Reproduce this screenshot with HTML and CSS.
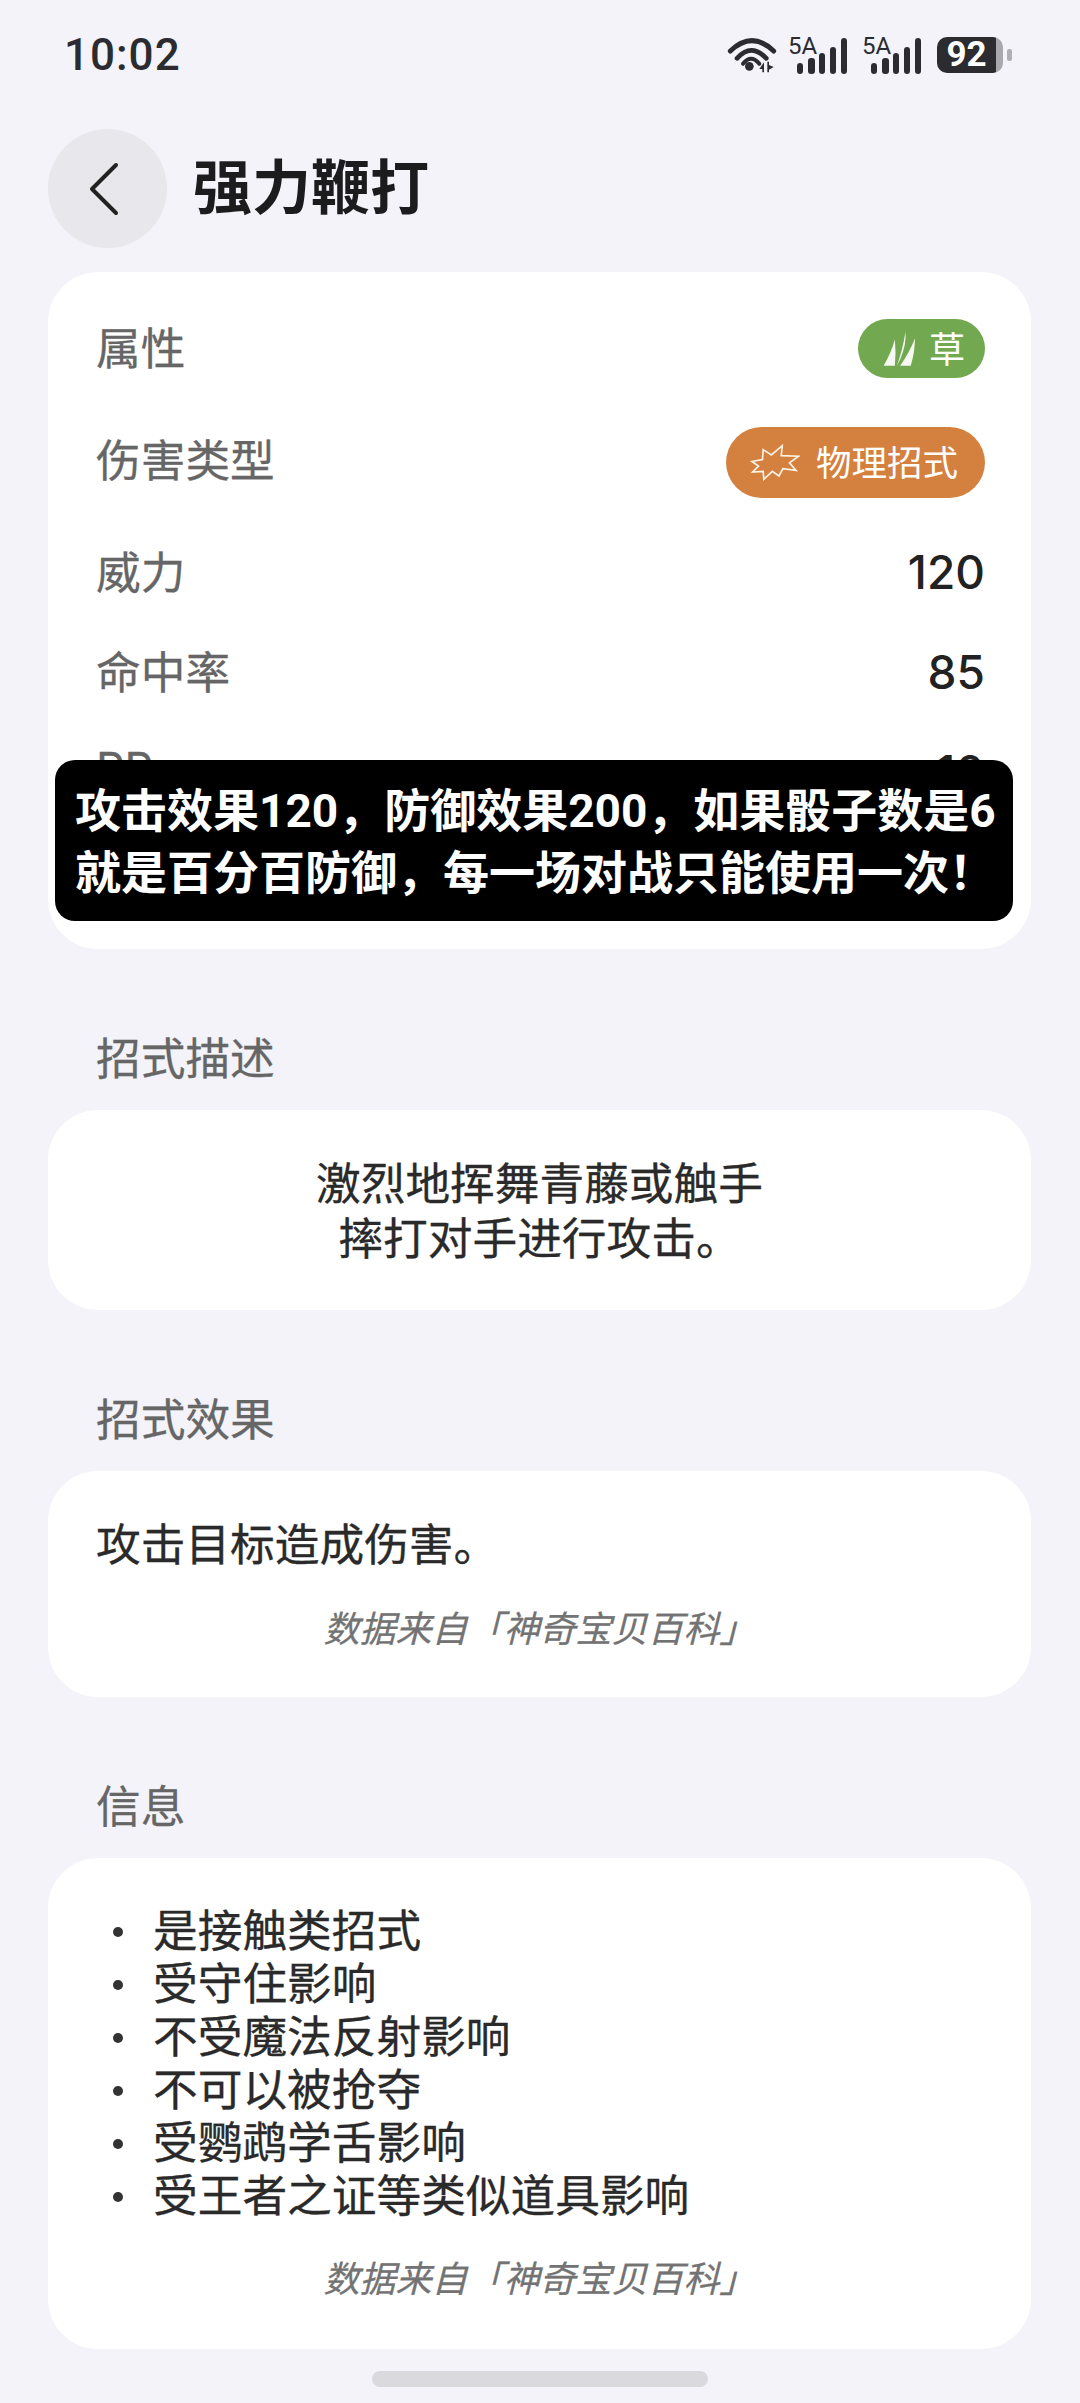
FILE: index.html
```html
<!DOCTYPE html>
<html lang="zh">
<head>
  <title>强力鞭打</title>
  <meta charset="utf-8">
  <meta name="viewport" content="width=device-width, initial-scale=1">
  <link rel="stylesheet" href="styles.css">
</head>
<body>
  <div class="status-bar">
    <span class="time">10:02</span>
    <div class="status-icons">
      <svg class="wifi" viewBox="25 20 150 120" width="50" height="40">
        <path d="M35 68 Q100 6 165 68" fill="none" stroke="#2b2b30" stroke-width="15" stroke-linecap="round"/>
        <path d="M55 90 Q98 42 143 90" fill="none" stroke="#2b2b30" stroke-width="14" stroke-linecap="round"/>
        <path d="M73 106 Q97 76 122 106" fill="none" stroke="#2b2b30" stroke-width="12" stroke-linecap="round"/>
        <circle cx="92" cy="114" r="13" fill="#2b2b30"/>
        <path d="M122 122 L136 102 V132 H131 V122 Z M146 100 H151 V110 L165 116 L151 124 V132 H146 Z" fill="#2b2b30"/>
      </svg>
      <svg class="signal" viewBox="0 0 60 37" width="60" height="37">
        <text x="0" y="17" class="signal-label">5A</text>
        <rect x="9" y="26" width="6" height="11" rx="3"/>
        <rect x="20" y="21" width="7" height="16" rx="3"/>
        <rect x="31" y="16" width="6" height="21" rx="3"/>
        <rect x="42" y="10" width="6" height="27" rx="3"/>
        <rect x="53" y="1" width="6" height="36" rx="3"/>
      </svg>
      <svg class="signal" viewBox="0 0 60 37" width="60" height="37">
        <text x="0" y="17" class="signal-label">5A</text>
        <rect x="9" y="26" width="6" height="11" rx="3"/>
        <rect x="20" y="21" width="7" height="16" rx="3"/>
        <rect x="31" y="16" width="6" height="21" rx="3"/>
        <rect x="42" y="10" width="6" height="27" rx="3"/>
        <rect x="53" y="1" width="6" height="36" rx="3"/>
      </svg>
      <div class="battery"><span class="battery-level">92</span></div>
      <span class="battery-nub"></span>
    </div>
  </div>

  <header class="nav">
    <button class="back">
      <svg viewBox="0 0 30 54" width="30" height="54">
        <path d="M27 3 L3 27 L27 51" fill="none" stroke="#222" stroke-width="4" stroke-linecap="round" stroke-linejoin="round"/>
      </svg>
    </button>
    <h1>强力鞭打</h1>
  </header>

  <main>
    <div class="card stats">
      <div class="row row-first">
        <span class="label">属性</span>
        <span class="chip chip-grass">
          <svg viewBox="40 36 100 106" width="33" height="35">
            <path d="M42 141 Q64 104 76 62 Q80 104 76 141 Z" fill="#f6f8f2"/>
            <path d="M82 141 Q100 92 108 38 Q112 74 92 122 Z" fill="#f6f8f2"/>
            <path d="M92 141 Q120 102 137 58 Q136 104 124 141 Z" fill="#f6f8f2"/>
          </svg>
          草
        </span>
      </div>
      <div class="row row-tall">
        <span class="label">伤害类型</span>
        <span class="chip chip-physical">
          <svg viewBox="30 15 152 112" width="50" height="37">
            <path d="M36 68 L68 62 L70 32 L95 48 L128 20 L125 50 L178 52 L150 72 L170 95 L130 90 L118 112 L98 98 L72 122 L70 98 L38 100 L56 82 Z" fill="none" stroke="#fbf3e6" stroke-width="5"/>
          </svg>
          物理招式
        </span>
      </div>
      <div class="row"><span class="label">威力</span><span class="value">120</span></div>
      <div class="row"><span class="label">命中率</span><span class="value">85</span></div>
      <div class="row"><span class="label">PP</span><span class="value">10</span></div>
    </div>

    <h2>招式描述</h2>
    <div class="card text-card">
      <p class="desc">激烈地挥舞青藤或触手<br>摔打对手进行攻击。</p>
    </div>

    <h2>招式效果</h2>
    <div class="card text-card">
      <p class="body-text">攻击目标造成伤害。</p>
      <p class="source">数据来自「神奇宝贝百科」</p>
    </div>

    <h2>信息</h2>
    <div class="card text-card list-card">
      <ul class="info-list">
        <li>是接触类招式</li>
        <li>受守住影响</li>
        <li>不受魔法反射影响</li>
        <li>不可以被抢夺</li>
        <li>受鹦鹉学舌影响</li>
        <li>受王者之证等类似道具影响</li>
      </ul>
      <p class="source">数据来自「神奇宝贝百科」</p>
    </div>
  </main>

  <div class="home-bar"></div>

  <div class="caption">攻击效果120，防御效果200，如果骰子数是6<br>就是百分百防御，每一场对战只能使用一次！</div>
</body>
</html>
```

FILE: styles.css
```css
html, body {
  height: 2403px;
}
body {
  margin: 0;
  overflow: hidden;
  position: relative;
  background-color: #f3f3f9;
  color: #222;
  font-family: "Inter", "Noto Sans CJK SC", sans-serif;
}

/* top status line */
.status-bar {
  height: 110px;
  padding: 0 68px 0 64px;
  box-sizing: border-box;
  display: flex;
  justify-content: space-between;
  align-items: center;
}
.time {
  font-family: Roboto, sans-serif;
  font-size: 44px;
  font-weight: 500;
  color: #2b2b30;
  letter-spacing: 1px;
}
.status-icons {
  display: flex;
  align-items: center;
  gap: 14px;
}
.wifi {
  margin-right: -3px;
}
.signal {
  overflow: visible;
}
.signal rect {
  fill: #2b2b30;
}
.signal-label {
  font-family: Roboto, sans-serif;
  font-size: 24px;
  fill: #2b2b30;
}
.battery {
  width: 66px;
  height: 36px;
  border-radius: 10px;
  background: linear-gradient(to right, #2b2b30 59px, #a9a9ad 59px);
  display: flex;
  align-items: center;
  justify-content: center;
  margin-left: 1px;
}
.battery-level {
  font-family: Roboto, sans-serif;
  font-size: 35px;
  line-height: 36px;
  font-weight: 700;
  color: #fff;
  padding-right: 7px;
}
.battery-nub {
  width: 5px;
  height: 12px;
  border-radius: 2px;
  background-color: #b0b0b4;
  margin-left: -10px;
}

.nav {
  display: flex;
  align-items: center;
  gap: 26px;
  padding: 19px 0 0 48px;
}
.back {
  width: 119px;
  height: 119px;
  border: none;
  border-radius: 50%;
  background-color: #e8e8ec;
  padding: 0 8px 0 0;
  display: flex;
  align-items: center;
  justify-content: center;
}
h1 {
  margin: 0;
  padding-bottom: 10px;
  font-size: 59px;
  font-weight: 700;
  color: #1c1c1e;
}

main {
  padding: 24px 49px 0 48px;
}
.card {
  background-color: #fff;
  border-radius: 50px;
}
.stats {
  height: 677px;
  box-sizing: border-box;
  padding: 26px 46px 0 48px;
  overflow: hidden;
}
.row {
  height: 100px;
  display: flex;
  justify-content: space-between;
  align-items: center;
}
.row-first {
  height: 101px;
}
.row-tall {
  height: 123px;
}
.label {
  font-size: 44.7px;
  color: #666;
  padding-bottom: 6px;
  -webkit-text-stroke: 0.3px #666;
}
.value {
  font-size: 46px;
  font-weight: 500;
  color: #222;
}
.chip {
  display: flex;
  align-items: center;
  color: #fff;
  box-sizing: border-box;
  border-radius: 40px;
}
.chip svg {
  margin-top: 4px;
}
.chip-grass {
  height: 59px;
  padding: 0 20px 4px 25px;
  gap: 13px;
  font-size: 36px;
  background-color: #72a84f;
}
.chip-physical {
  height: 71px;
  margin-top: 4px;
  padding: 0 27px 4px 24px;
  gap: 16px;
  font-size: 35.5px;
  background-color: #d4813f;
}

h2 {
  margin: 80px 0 21px 48px;
  font-size: 44.7px;
  line-height: 60px;
  font-weight: 400;
  color: #666;
  -webkit-text-stroke: 0.3px #666;
}
.text-card {
  padding: 47px 48px 43px;
}
.list-card {
  padding-bottom: 45px;
}
p {
  margin: 0;
}
.desc, .body-text {
  font-size: 44.7px;
  line-height: 55px;
  color: #2a2a2a;
  -webkit-text-stroke: 0.3px #2a2a2a;
}
.desc {
  text-align: center;
}
.source {
  margin-top: 31px;
  text-align: center;
  font-size: 36px;
  line-height: 50px;
  font-style: italic;
  color: #737373;
  -webkit-text-stroke: 0.3px #737373;
}
.info-list {
  margin: 0;
  padding: 0 0 0 57px;
  list-style: none;
  font-size: 44.7px;
  line-height: 53px;
  color: #2a2a2a;
  -webkit-text-stroke: 0.3px #2a2a2a;
}
.info-list li {
  position: relative;
}
.info-list li::before {
  content: "";
  position: absolute;
  left: -40px;
  top: 22px;
  width: 10px;
  height: 10px;
  border-radius: 50%;
  background-color: #333;
}

.home-bar {
  width: 336px;
  height: 16px;
  margin: 22px auto 0;
  border-radius: 8px;
  background-color: #d9d9de;
}

/* subtitle strip laid over the first card */
.caption {
  position: absolute;
  left: 55px;
  top: 760px;
  width: 958px;
  height: 161px;
  box-sizing: border-box;
  padding: 20px 0 0 20px;
  border-radius: 20px;
  background-color: #000;
  color: #fff;
  font-family: Roboto, "Noto Sans CJK SC", sans-serif;
  font-size: 46px;
  line-height: 62px;
  font-weight: 700;
  white-space: nowrap;
}
```
